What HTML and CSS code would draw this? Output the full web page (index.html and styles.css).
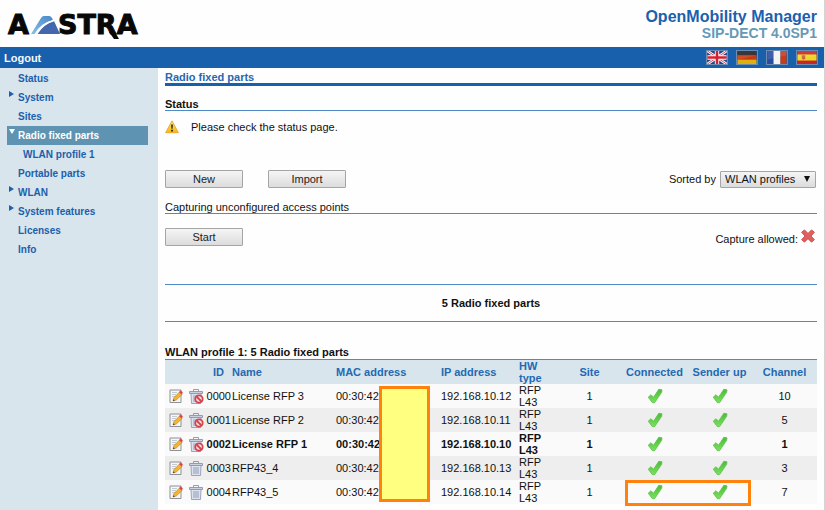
FILE: index.html
```html
<!DOCTYPE html>
<html lang="en">
<head>
<meta charset="utf-8">
<title>OpenMobility Manager</title>
<link rel="stylesheet" href="styles.css">
</head>
<body>
<svg class="symbols" aria-hidden="true">
  <defs>
    <linearGradient id="green" x1="0" y1="0" x2="0" y2="1"><stop offset="0" stop-color="#4fb83c"/><stop offset="1" stop-color="#79e45c"/></linearGradient>
    <linearGradient id="amber" x1="0" y1="0" x2="0" y2="1"><stop offset="0" stop-color="#ffe873"/><stop offset="1" stop-color="#f9b510"/></linearGradient>
    <linearGradient id="sky" x1="1" y1="0" x2="0" y2="1"><stop offset="0" stop-color="#4b86c8"/><stop offset="1" stop-color="#86bfe8"/></linearGradient>
    <symbol id="check" viewBox="0 0 16 16"><path d="M1.200 9.200 4 6.700l2.500 2.500L11.800 1.300l3.200.5-.3 2.500L7.600 14.700H5.400z" fill="url(#green)" stroke="#5cc24c" stroke-width=".8" stroke-linejoin="round"/></symbol>
    <symbol id="edit" viewBox="0 0 16 16"><path d="M2 2h11v12.500H2z" fill="#f4f6f8" stroke="#8b9299"/><path d="M4 4.500h5M4 6.500h4M4 8.500h3" stroke="#c5cbd2"/><path d="m5 13 1-3.500L11.500 4 14 6.500 8.300 12z" fill="#f6b32c" stroke="#b87f26" stroke-width=".6"/><path d="m11 4 1.700-1.700L15 4.700 13.400 6.400z" fill="#dd4450"/><path d="m5 13 .5-1.700 1.300 1.200z" fill="#333"/></symbol>
    <symbol id="bin" viewBox="0 0 16 16"><path d="M3 5.500h10l-.5 10h-9z" fill="#dde2ee" stroke="#9aa3b8"/><path d="M6 7v7M8 7v7M10 7v7" stroke="#929cb5"/><path d="M1.500 3.500h13v2h-13z" fill="#cbd1df" stroke="#929bb0"/><path d="M5.500 3V1.500h5V3" fill="none" stroke="#929bb0"/></symbol>
    <symbol id="ban" viewBox="0 0 16 16"><circle cx="11" cy="11" r="3.700" fill="#f7dfe0" stroke="#d6434c" stroke-width="1.800"/><path d="m8.500 8.500 5 5" stroke="#d6434c" stroke-width="1.800"/></symbol>
  </defs>
</svg>
<header class="top">
  <svg class="logo" viewBox="0 0 140 32" role="img" aria-label="Aastra">
    <text class="logo-text" x="1" y="24">A</text>
    <path d="M24 24 34 8q1-2 3-2h5q2 0 3 2l1 2q-12 3-18 14z" fill="url(#sky)"/>
    <path d="M30 24q6-10 17-13l6 13z" fill="#4267ac"/>
    <path d="M27.500 24q6-11 19-14l.5 1.300Q37 14 30.500 24z" fill="#fff"/>
    <text class="logo-text" x="51" y="24">STRA</text>
    <path d="M102 22h6l4 7h-5z" fill="#080808"/>
  </svg>
  <div class="product"><h1>OpenMobility Manager</h1><p>SIP-DECT 4.0SP1</p></div>
</header>
<nav class="bar">
  <a href="#">Logout</a>
  <div class="flags">
    <a href="#" aria-label="English"><svg viewBox="0 0 22 15"><path fill="#27468f" d="M0 0h22v15H0z"/><path d="m0 0 22 15M22 0 0 15" stroke="#fff" stroke-width="3"/><path d="m0 0 22 15M22 0 0 15" stroke="#cf2f3c"/><path d="M11 0v15M0 7.500h22" stroke="#fff" stroke-width="5"/><path d="M11 0v15M0 7.500h22" stroke="#d4202f" stroke-width="3"/></svg></a>
    <a href="#" aria-label="Deutsch"><svg viewBox="0 0 22 15"><path fill="#222" d="M0 0h22v5H0z"/><path fill="#c93a14" d="M0 5h22v5H0z"/><path fill="#deb010" d="M0 10h22v5H0z"/><path d="M0 0h22v5L0 10z" fill="#fff" opacity=".1"/></svg></a>
    <a href="#" aria-label="Français"><svg viewBox="0 0 22 15"><path fill="#2b4da0" d="M0 0h7v15H0z"/><path fill="#f3f3f3" d="M7 0h8v15H7z"/><path fill="#c83c18" d="M15 0h7v15h-7z"/><path d="M0 0h22v5L0 10z" fill="#fff" opacity=".1"/></svg></a>
    <a href="#" aria-label="Español"><svg viewBox="0 0 22 15"><path fill="#cb2424" d="M0 0h22v15H0z"/><path fill="#e9d924" d="M0 4h22v7H0z"/><path d="M5 5h4v4l-2 1-2-1z" fill="#c4602c"/><path d="M0 0h22v5L0 10z" fill="#fff" opacity=".1"/></svg></a>
  </div>
</nav>
<div class="page">
  <nav class="side">
    <ul>
      <li><a href="#">Status</a></li>
      <li class="closed"><a href="#">System</a></li>
      <li><a href="#">Sites</a></li>
      <li class="open"><a href="#">Radio fixed parts</a></li>
      <li class="sub"><a href="#">WLAN profile 1</a></li>
      <li><a href="#">Portable parts</a></li>
      <li class="closed"><a href="#">WLAN</a></li>
      <li class="closed"><a href="#">System features</a></li>
      <li><a href="#">Licenses</a></li>
      <li><a href="#">Info</a></li>
    </ul>
  </nav>
  <main>
    <h2>Radio fixed parts</h2>
    <h3>Status</h3>
    <p class="notice"><svg viewBox="0 0 16 16" aria-hidden="true"><path d="M8 1 15.300 14.500H.7z" fill="url(#amber)" stroke="#e5a52a" stroke-linejoin="round"/><path d="M7 5h2l-.4 5H7.400zM7 11h2v2H7z" fill="#222"/></svg>Please check the status page.</p>
    <div class="row">
      <div class="buttons"><button type="button">New</button><button type="button">Import</button></div>
      <div class="sort"><label for="sort">Sorted by</label><span class="pick"><select id="sort"><option>WLAN profiles</option></select></span></div>
    </div>
    <h3 class="plain">Capturing unconfigured access points</h3>
    <div class="row capture">
      <button type="button">Start</button>
      <p>Capture allowed: <svg viewBox="0 0 16 16" role="img" aria-label="no"><path d="m4 1 4 4 4-4 3.300 2.700L11.500 8l3.800 4.300L12 15l-4-4-4 4-3.300-2.700L4.500 8 .7 3.700z" fill="#e0605f" stroke="#c94848" stroke-linejoin="round"/></svg></p>
    </div>
    <p class="total">5 Radio fixed parts</p>
    <table>
      <caption>WLAN profile 1: 5 Radio fixed parts</caption>
      <colgroup><col class="c-act"><col class="c-id"><col class="c-name"><col class="c-mac"><col class="c-ip"><col class="c-hw"><col span="4"></colgroup>
      <thead><tr><th></th><th class="id">ID</th><th>Name</th><th>MAC address</th><th>IP address</th><th>HW type</th><th class="mid">Site</th><th class="mid">Connected</th><th class="mid">Sender up</th><th class="mid">Channel</th></tr></thead>
      <tbody>
        <tr><td class="act"><svg><use href="#edit"/></svg><svg><use href="#bin"/><use href="#ban"/></svg></td><td class="id">0000</td><td>License RFP 3</td><td class="mac">00:30:42:<span class="mask"></span></td><td>192.168.10.12</td><td>RFP L43</td><td class="mid">1</td><td class="mid"><svg><use href="#check"/></svg></td><td class="mid"><svg><use href="#check"/></svg></td><td class="mid">10</td></tr>
        <tr><td class="act"><svg><use href="#edit"/></svg><svg><use href="#bin"/><use href="#ban"/></svg></td><td class="id">0001</td><td>License RFP 2</td><td>00:30:42:</td><td>192.168.10.11</td><td>RFP L43</td><td class="mid">1</td><td class="mid"><svg><use href="#check"/></svg></td><td class="mid"><svg><use href="#check"/></svg></td><td class="mid">5</td></tr>
        <tr class="strong"><td class="act"><svg><use href="#edit"/></svg><svg><use href="#bin"/><use href="#ban"/></svg></td><td class="id">0002</td><td>License RFP 1</td><td>00:30:42</td><td>192.168.10.10</td><td>RFP L43</td><td class="mid">1</td><td class="mid"><svg><use href="#check"/></svg></td><td class="mid"><svg><use href="#check"/></svg></td><td class="mid">1</td></tr>
        <tr><td class="act"><svg><use href="#edit"/></svg><svg><use href="#bin"/></svg></td><td class="id">0003</td><td>RFP43_4</td><td>00:30:42:</td><td>192.168.10.13</td><td>RFP L43</td><td class="mid">1</td><td class="mid"><svg><use href="#check"/></svg></td><td class="mid"><svg><use href="#check"/></svg></td><td class="mid">3</td></tr>
        <tr><td class="act"><svg><use href="#edit"/></svg><svg><use href="#bin"/></svg></td><td class="id">0004</td><td>RFP43_5</td><td>00:30:42:</td><td>192.168.10.14</td><td>RFP L43</td><td class="mid">1</td><td class="mid marked"><svg><use href="#check"/></svg><span class="frame"></span></td><td class="mid"><svg><use href="#check"/></svg></td><td class="mid">7</td></tr>
      </tbody>
    </table>
  </main>
</div>
</body>
</html>
```
FILE: styles.css
```css
* { box-sizing: border-box; }
body { margin: 0; min-height: 100vh; display: flex; flex-direction: column; font: 11px/12px "Liberation Sans", Arial, sans-serif; color: #111; background: #fefefe; border-right: 1px solid #d4d4d4; }
h1, h2, h3, p, ul { margin: 0; padding: 0; }
a { color: inherit; text-decoration: none; }
.symbols { position: absolute; width: 0; height: 0; }
.top { display: flex; justify-content: space-between; padding: 8px 7px 0; height: 47px; flex: none; }
.logo { width: 140px; height: 32px; margin-top: 2px; overflow: visible; }
.logo-text { font: bold 27px "DejaVu Sans", sans-serif; fill: #080808; stroke: #080808; stroke-width: 1px; }
.product { text-align: right; font-weight: bold; }
.product h1 { font-size: 16px; line-height: 17px; color: #1b60ad; }
.product p { font-size: 14px; line-height: 16px; color: #6699b5; }
.bar { display: flex; align-items: center; justify-content: space-between; flex: none; height: 21px; padding: 0 6px 0 4px; background: #185fac; color: #f4f8fc; font-weight: bold; }
.flags { display: flex; gap: 8px; }
.flags svg { display: block; width: 22px; height: 15px; border: 1px solid #6d8cb0; }
.page { display: flex; flex: 1; }
.side { flex: none; width: 158px; background: #d9e5ec; padding: 1px 10px 0 7px; font-size: 10px; font-weight: bold; color: #1b60ad; }
.side ul { list-style: none; }
.side li { position: relative; line-height: 19px; padding-left: 11px; }
.side .sub { padding-left: 16px; }
.side .open { background: #5e94b1; color: #fff; }
.closed::before, .open::before { content: ""; position: absolute; left: 2px; top: 3px; border: solid transparent; }
.closed::before { border-width: 3px 0 3px 5px; border-left-color: #1b60ad; }
.open::before { border-width: 5px 3px 0; border-top-color: #fff; }
main { flex: 1; min-width: 0; padding: 3px 7px 0; }
h2 { font-size: 11px; line-height: 12px; color: #2768b0; border-bottom: 3px solid #185fac; }
h3 { margin-top: 12px; font-size: 11px; line-height: 12px; border-bottom: 1px solid #4f8ac6; }
h3.plain { font-weight: normal; }
.notice { display: flex; align-items: center; gap: 12px; height: 16px; margin-top: 8px; }
.notice svg { width: 14px; height: 14px; }
.row { display: flex; justify-content: space-between; align-items: center; height: 20px; margin-top: 34px; }
.capture { margin-top: 13px; padding-right: 2px; }
.capture svg { width: 14px; height: 14px; vertical-align: 0; }
.buttons { display: flex; gap: 25px; }
button { width: 78px; height: 18px; padding: 0; font: 11px/14px "Liberation Sans", Arial, sans-serif; color: #222; border: 1px solid #a5a5a5; border-radius: 1px; background: linear-gradient(#f5f5f5, #dcdcdc); }
.sort { display: flex; align-items: center; gap: 4px; padding-right: 1px; }
.pick { position: relative; }
.pick::after { content: ""; position: absolute; right: 6px; top: 5px; border: solid transparent; border-width: 6px 3px 0; border-top-color: #111; }
select { appearance: none; display: block; width: 96px; height: 17px; padding: 0 4px; font: 11px/14px "Liberation Sans", Arial, sans-serif; color: #111; border: 1px solid #a5a5a5; border-radius: 1px; background: linear-gradient(#f5f5f5, #dcdcdc); }
.total { margin-top: 37px; padding: 12px 0; border: solid #4f8ac6; border-width: 1px 0; text-align: center; font-weight: bold; }
table { width: 100%; margin-top: 24px; border-collapse: collapse; table-layout: fixed; }
caption { text-align: left; font-weight: bold; line-height: 13px; border-bottom: 1px solid #4f8ac6; }
th, td { height: 24px; padding: 0; text-align: left; }
thead tr { background: #d9e5ec; color: #2369b3; }
tbody tr:nth-child(odd) { background: #fafafa; }
tbody tr:nth-child(even) { background: #eee; }
.strong td { font-weight: bold; }
td svg { display: inline-block; width: 16px; height: 16px; vertical-align: middle; }
.act { padding-left: 3px; white-space: nowrap; }
.act svg + svg { margin-left: 4px; }
.id { text-align: right; padding-right: 1px; }
thead .id { padding-right: 8px; }
.mid { text-align: center; }
.c-act { width: 39px; }
.c-id { width: 28px; }
.c-name { width: 104px; }
.c-mac { width: 105px; }
.c-ip { width: 78px; }
.c-hw { width: 38px; }
.mac, .marked { position: relative; }
.mask { position: absolute; left: 43px; top: 2px; width: 51px; height: 116px; background: #ffff80; border: 3px solid #ff820d; }
.frame { position: absolute; left: 3px; top: 0; width: 126px; height: 26px; border: 3px solid #ff820d; }
```
